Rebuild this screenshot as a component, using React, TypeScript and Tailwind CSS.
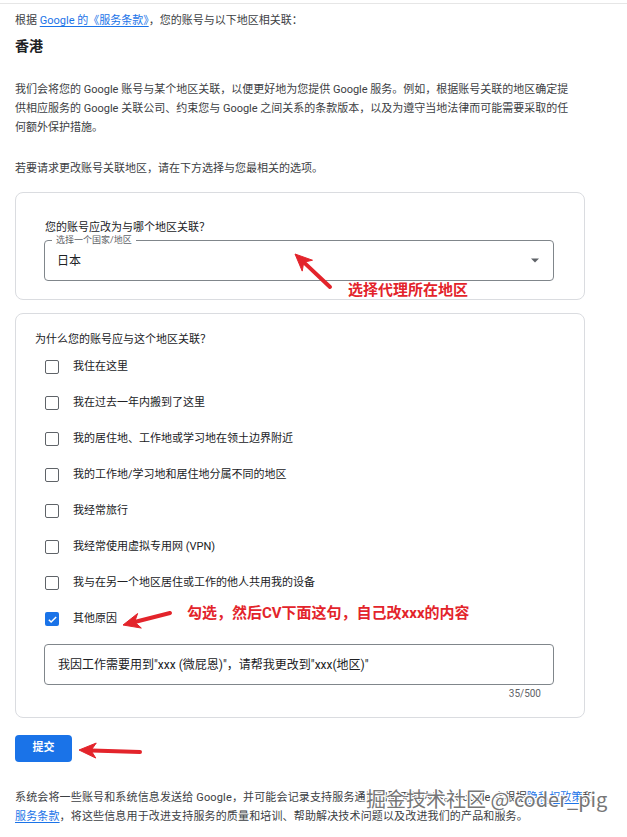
import React from "react";

const reasons = [
  "我住在这里",
  "我在过去一年内搬到了这里",
  "我的居住地、工作地或学习地在领土边界附近",
  "我的工作地/学习地和居住地分属不同的地区",
  "我经常旅行",
  "我经常使用虚拟专用网 (VPN)",
  "我与在另一个地区居住或工作的他人共用我的设备",
  "其他原因",
];

// red annotation arrow: tail -> tip
function Arrow({ x1, y1, x2, y2 }: { x1: number; y1: number; x2: number; y2: number }) {
  const dx = x2 - x1;
  const dy = y2 - y1;
  const len = Math.hypot(dx, dy);
  const ux = dx / len;
  const uy = dy / len;
  const px = -uy;
  const py = ux;
  const head = 15;
  const hw = 7.5;
  const bx = x2 - ux * head;
  const by = y2 - uy * head;
  const pts = [
    [x2, y2],
    [bx + px * hw - ux * 2, by + py * hw - uy * 2],
    [bx + ux * 3, by + uy * 3],
    [bx - px * hw - ux * 2, by - py * hw - uy * 2],
  ]
    .map((p) => p.join(","))
    .join(" ");
  return (
    <g fill="#e3242b" stroke="#e3242b">
      <line x1={x1} y1={y1} x2={bx + ux * 2} y2={by + uy * 2} strokeWidth={4} strokeLinecap="round" />
      <polygon points={pts} strokeWidth={1} strokeLinejoin="round" />
    </g>
  );
}

function Box({ checked }: { checked: boolean }) {
  if (checked) {
    return (
      <span className="flex h-[14px] w-[14px] items-center justify-center rounded-[2px] bg-[#1a73e8]">
        <svg width="11" height="11" viewBox="0 0 24 24" fill="none" stroke="white" strokeWidth="3.2">
          <path d="M4 12.5l5 5L20 6.5" />
        </svg>
      </span>
    );
  }
  return <span className="block h-[14px] w-[14px] rounded-[2px] border-[1.5px] border-[#5f6368]" />;
}

export default function App() {
  return (
    <div
      className="relative min-h-[837px] w-[627px] bg-white text-[11px] text-[#3c4043]"
      style={{ fontFamily: 'Roboto, "Noto Sans CJK SC", sans-serif' }}
    >
      <div className="h-[4px] border-b border-[#e6e6e6]" />

      <div className="px-[15px]">
        <p className="mt-[7px] leading-[19px]">
          根据{" "}
          <a className="text-[#1a73e8] underline underline-offset-2 decoration-[#1a73e8]">Google 的《服务条款》</a>
          ，您的账号与以下地区相关联：
        </p>
        <h2 className="mt-[7px] text-[14px] font-bold leading-[19px] text-[#202124]">香港</h2>

        <p className="mt-[24px] leading-[19px]">
          我们会将您的 Google 账号与某个地区关联，以便更好地为您提供 Google 服务。例如，根据账号关联的地区确定提
          <br />
          供相应服务的 Google 关联公司、约束您与 Google 之间关系的条款版本，以及为遵守当地法律而可能需要采取的任
          <br />
          何额外保护措施。
        </p>

        <p className="mt-[22px] leading-[19px]">若要请求更改账号关联地区，请在下方选择与您最相关的选项。</p>

        <div className="mt-[14px] w-[570px] rounded-[8px] border border-[#dadce0] pb-[18px] pl-[28px] pt-[25px]">
          <p className="ml-px leading-[19px] text-[#202124]">您的账号应改为与哪个地区关联？</p>
          <div className="relative mt-[3px] flex h-[41px] w-[510px] items-center justify-between rounded-[4px] border border-[#80868b] pl-[12px] pr-[14px]">
            <span className="absolute left-[7px] top-[-7px] bg-white px-[4px] text-[9px] leading-[12px] text-[#5f6368]">
              选择一个国家/地区
            </span>
            <span className="text-[12px] text-[#202124]">日本</span>
            <svg width="8" height="5" viewBox="0 0 10 5">
              <path d="M0 0h10L5 5z" fill="#5f6368" />
            </svg>
          </div>
        </div>

        <div className="mt-[13px] w-[570px] rounded-[8px] border border-[#dadce0] pb-[16px] pl-[19px] pt-[16px]">
          <p className="leading-[19px] text-[#202124]">为什么您的账号应与这个地区关联？</p>
          <div className="flex flex-col">
            {reasons.map((r, i) => (
              <div key={r} className="flex h-[36px] items-center pl-[10px]">
                <Box checked={i === reasons.length - 1} />
                <span className="ml-[14px] text-[#202124]">{r}</span>
              </div>
            ))}
          </div>
          <div className="ml-[9px] mt-[7px] flex h-[41px] w-[510px] items-center rounded-[4px] border border-[#80868b] px-[13px] text-[12px] text-[#202124]">
            我因工作需要用到"xxx (微屁恩)"，请帮我更改到"xxx(地区)"
          </div>
          <p className="ml-[9px] mt-[2px] w-[510px] pr-[13px] text-right text-[10px] leading-[14px] text-[#5f6368]">35/500</p>
        </div>

        <button className="mt-[17px] h-[27px] w-[57px] rounded-[4px] bg-[#1a73e8] text-[11px] font-bold text-white">
          提交
        </button>

        <p className="mt-[26px] whitespace-nowrap leading-[19px] tracking-[0.15px]">
          系统会将一些账号和系统信息发送给 Google，并可能会记录支持服务通话和聊天的内容。Google 会根据
          <a className="text-[#1a73e8] underline underline-offset-2">隐私权政策</a>和
          <br />
          <a className="text-[#1a73e8] underline underline-offset-2">服务条款</a>
          ，将这些信息用于改进支持服务的质量和培训、帮助解决技术问题以及改进我们的产品和服务。
        </p>
      </div>

      {/* annotations */}
      <span className="absolute left-[348px] top-[280px] text-[15px] font-bold leading-[20px] text-[#e3242b]">
        选择代理所在地区
      </span>
      <span className="absolute left-[187px] top-[603px] text-[15px] font-bold leading-[20px] text-[#e3242b]">
        勾选，然后CV下面这句，自己改xxx的内容
      </span>
      <span
        className="absolute left-[366px] top-[786px] whitespace-nowrap text-[20px] leading-[26px] text-[#777777]"
        style={{
          fontFamily: '"Noto Sans CJK SC", sans-serif',
          textShadow: "1px 1px 0 #fff, -1px -1px 0 #fff, 1px -1px 0 #fff, -1px 1px 0 #fff",
        }}
      >
        掘金技术社区 @ coder_pig
      </span>
      <svg className="pointer-events-none absolute left-0 top-0" width="627" height="837">
        <Arrow x1={330} y1={287} x2={295} y2={254} />
        <Arrow x1={170} y1={613} x2={123} y2={625} />
        <Arrow x1={140} y1={752} x2={79} y2={750} />
      </svg>
    </div>
  );
}
